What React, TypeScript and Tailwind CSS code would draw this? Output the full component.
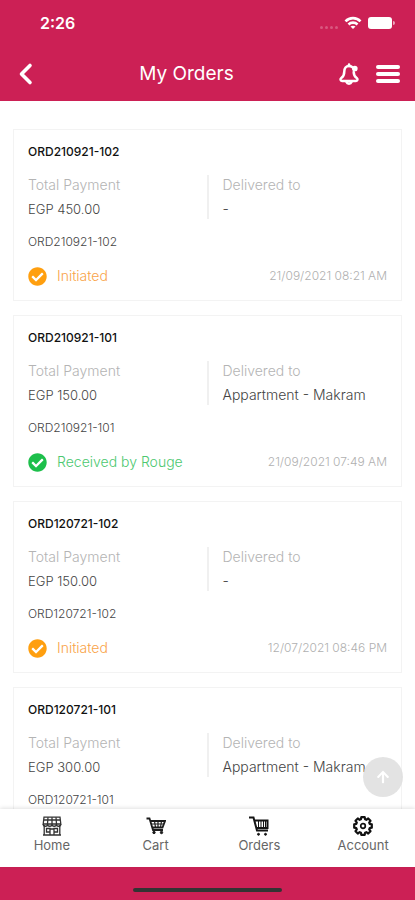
import React from "react";
import { FaCheckCircle, FaArrowUp } from "react-icons/fa";

type Order = { id: string; total: string; to: string; status?: string; done?: boolean; date?: string };

const orders: Order[] = [
  { id: "ORD210921-102", total: "EGP 450.00", to: "-", status: "Initiated", date: "21/09/2021 08:21 AM" },
  { id: "ORD210921-101", total: "EGP 150.00", to: "Appartment - Makram", status: "Received by Rouge", done: true, date: "21/09/2021 07:49 AM" },
  { id: "ORD120721-102", total: "EGP 150.00", to: "-", status: "Initiated", date: "12/07/2021 08:46 PM" },
  { id: "ORD120721-101", total: "EGP 300.00", to: "Appartment - Makram" },
];

function BackIcon() {
  return (
    <svg viewBox="0 0 24 24" className="size-6" fill="none" stroke="currentColor" strokeWidth="3.600" strokeLinecap="round" strokeLinejoin="round">
      <path d="M15 3.500 6.500 12 15 20.500" />
    </svg>
  );
}

function WifiIcon() {
  return (
    <svg viewBox="0 0 18 14" className="h-3.5 w-[18px]" fill="none" stroke="currentColor" strokeWidth="2.600">
      <path d="M1.500 5.300C5.500 1 12.500 1 16.500 5.300" />
      <path d="M4.500 8.500c2.500-2.500 6.500-2.500 9 0" />
      <path d="M9 13 6.500 10.600c1.400-1.200 3.600-1.200 5 0z" fill="currentColor" stroke="none" />
    </svg>
  );
}

function BellIcon() {
  return (
    <svg viewBox="0 0 22 24" className="h-6 w-[22px]" fill="none" stroke="currentColor" strokeWidth="2.500" strokeLinejoin="round" strokeLinecap="round">
      <path d="M11 2.500v1.500" />
      <path d="M14 5C13.200 4.300 12.200 4 11 4 8 4 6.300 6.500 6.300 9.500c0 3.500-.8 5-3 6.500-1.300 1-1 3 .7 3h14c1.700 0 2-2 .7-3-2.200-1.500-3-3-3-6" />
      <path d="M8.500 20c.8 2.200 4.200 2.200 5 0" />
      <circle cx="16.800" cy="6.500" r="1.600" fill="currentColor" />
    </svg>
  );
}

function StoreIcon() {
  return (
    <svg viewBox="0 0 20 20" className="size-5" fill="none" stroke="#333" strokeWidth="1.300">
      <path d="M2 1.200h16l.8 6.800H1.200zM2.200 9v10M17.800 9v10M1 19h18" />
      <path d="M6 1.200 5.500 8M10 1.200V8M14 1.200 14.500 8M2 4h16" />
      <path d="M1.200 8c0 3 4.400 3 4.400 0 0 3 4.400 3 4.400 0 0 3 4.400 3 4.400 0 0 3 4.400 3 4.400 0" />
      <path d="M8 19v-6h4v6M4.500 12.500H8v3.500H4.500zM12 12.500h3.500v3.500H12z" />
    </svg>
  );
}

function CartIcon() {
  return (
    <svg viewBox="0 0 20 20" className="size-5" fill="none" stroke="#1c1c1c" strokeWidth="1.800">
      <path d="M.5 2.500h3l3.500 11.500h10M4.500 5h14.500l-2.500 6.500H6.500" />
      <path strokeWidth="1.200" d="M5.500 8h12M8.500 5l1 6.500M12 5v6.500M15.500 5l-1 6.500" />
      <circle cx="8" cy="16.500" r="1.200" fill="#1c1c1c" strokeWidth="1" />
      <circle cx="15.500" cy="16.500" r="1.200" fill="#1c1c1c" strokeWidth="1" />
    </svg>
  );
}

function OrdersIcon() {
  return (
    <svg viewBox="0 0 20 20" className="size-5" fill="none" stroke="#151515" strokeWidth="2">
      <path d="M0 1.500h4.500l3.500 13H19M6 4.500h12.500V12H7.500" />
      <path strokeWidth="1" d="M9.500 5v7M12 5v7M14.500 5v7M16.500 5v7" />
      <circle cx="9.500" cy="18.300" r="1" fill="#151515" strokeWidth="1" />
      <circle cx="16.500" cy="18.300" r="1" fill="#151515" strokeWidth="1" />
    </svg>
  );
}

function GearIcon() {
  return (
    <svg viewBox="0 0 20 20" className="size-5" fill="none" stroke="#111">
      <path
        strokeWidth="2.200"
        strokeLinejoin="round"
        d="M8.300 1.200h3.400l.4 2.100 1.200.5 1.900-1.300 2.300 2.300-1.300 1.900.5 1.200 2.100.4v3.400l-2.100.4-.5 1.200 1.300 1.900-2.300 2.300-1.900-1.300-1.200.5-.4 2.100H8.300l-.4-2.100-1.200-.5-1.900 1.300-2.300-2.300 1.300-1.900-.5-1.200-2.100-.4V8.300l2.100-.4.500-1.200-1.300-1.900 2.300-2.300 1.900 1.300 1.200-.5z"
      />
      <circle cx="10" cy="10" r="2.300" strokeWidth="1.700" />
    </svg>
  );
}

function OrderCard({ order }: { order: Order }) {
  return (
    <article className="border border-[#f3f3f3] px-3.5 py-3">
      <h2 className="text-xs leading-5 font-medium text-[#111]">{order.id}</h2>
      <div className="mt-[11px] grid grid-cols-[1fr_2px_1fr] font-light whitespace-nowrap">
        <dl>
          <dt className="text-sm leading-6 text-[#b4b4b4]">Total Payment</dt>
          <dd className="text-[13px] leading-6 text-[#444]">{order.total}</dd>
        </dl>
        <span className="my-0.5 bg-[#f0f0f0]" />
        <dl className="pl-3.5 text-sm leading-6">
          <dt className="text-[#b4b4b4]">Delivered to</dt>
          <dd className="text-[#444]">{order.to}</dd>
        </dl>
      </div>
      <p className="mt-[11px] text-xs leading-5 font-light text-[#444]">{order.id}</p>
      {order.status && (
        <div className="mt-3 flex h-6 items-center whitespace-nowrap">
          <FaCheckCircle className={order.done ? "size-[19px] text-[#1dbf4b]" : "size-[19px] text-[#ff9f0f]"} />
          <span className={order.done ? "ml-2.5 text-sm font-light text-[#4cc870]" : "ml-2.5 text-sm font-light text-[#f9a348]"}>{order.status}</span>
          <time className="ml-auto text-xs font-light text-[#b0b0b0]">{order.date}</time>
        </div>
      )}
    </article>
  );
}

const tabs = [
  { label: "Home", Icon: StoreIcon },
  { label: "Cart", Icon: CartIcon },
  { label: "Orders", Icon: OrdersIcon },
  { label: "Account", Icon: GearIcon },
];

export default function App() {
  return (
    <div className="flex h-screen flex-col bg-white font-['Inter',sans-serif]">
      <header className="bg-[#cc2055] text-white">
        <div className="flex h-[46px] items-center pr-5 pl-10">
          <span className="text-base font-semibold">2:26</span>
          <div className="ml-auto flex items-center">
            <span className="mt-2 mr-1.5 flex gap-0.5">
              {[0, 1, 2, 3].map((i) => (
                <i key={i} className="size-[3px] rounded-full bg-white/25" />
              ))}
            </span>
            <WifiIcon />
            <span className="ml-1.5 h-3 w-6 rounded-[3px] border border-white/60 bg-white" />
            <span className="ml-px h-1 w-0.5 rounded-r bg-white/60" />
          </div>
        </div>
        <div className="flex h-[55px] items-center px-[15px]">
          <button aria-label="Back">
            <BackIcon />
          </button>
          <h1 className="flex-1 pr-1 text-center text-[19px] leading-6">My Orders</h1>
          <div className="flex items-center gap-4">
            <button aria-label="Notifications">
              <BellIcon />
            </button>
            <button aria-label="Menu" className="flex w-6 flex-col gap-[3px]">
              <i className="h-1 rounded-full bg-white" />
              <i className="h-1 rounded-full bg-white" />
              <i className="h-1 rounded-full bg-white" />
            </button>
          </div>
        </div>
      </header>
      <div className="relative min-h-0 flex-1">
        <main className="flex h-full flex-col gap-3.5 overflow-hidden px-[13px] pt-7">
          {orders.map((order) => (
            <OrderCard key={order.id} order={order} />
          ))}
        </main>
        <button aria-label="Back to top" className="absolute right-3 bottom-3 flex size-10 items-center justify-center rounded-full bg-[#dcdcdc]/80 text-white">
          <FaArrowUp className="size-3.5" />
        </button>
      </div>
      <nav className="relative grid h-[58px] grid-cols-4 bg-white shadow-[0_-1px_4px_rgba(0,0,0,0.12)]">
        {tabs.map(({ label, Icon }) => (
          <a key={label} href="#" className="flex flex-col items-center pt-[7px] text-[13px] leading-[18px] text-[#666]">
            <Icon />
            {label}
          </a>
        ))}
      </nav>
      <footer className="flex h-[33px] justify-center bg-[#cc2055] pt-[21px]">
        <div className="h-1 w-[149px] rounded-full bg-[#333]" />
      </footer>
    </div>
  );
}
